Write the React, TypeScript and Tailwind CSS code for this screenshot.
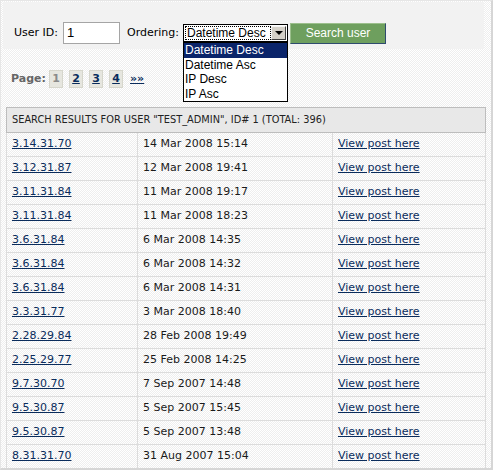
const rows: [string, string][] = [
  ["3.14.31.70", "14 Mar 2008 15:14"],
  ["3.12.31.87", "12 Mar 2008 19:41"],
  ["3.11.31.84", "11 Mar 2008 19:17"],
  ["3.11.31.84", "11 Mar 2008 18:23"],
  ["3.6.31.84", "6 Mar 2008 14:35"],
  ["3.6.31.84", "6 Mar 2008 14:32"],
  ["3.6.31.84", "6 Mar 2008 14:31"],
  ["3.3.31.77", "3 Mar 2008 18:40"],
  ["2.28.29.84", "28 Feb 2008 19:49"],
  ["2.25.29.77", "25 Feb 2008 14:25"],
  ["9.7.30.70", "7 Sep 2007 14:48"],
  ["9.5.30.87", "5 Sep 2007 15:45"],
  ["9.5.30.87", "5 Sep 2007 13:48"],
  ["8.31.31.70", "31 Aug 2007 15:04"],
]

const ORDERINGS = ["Datetime Desc", "Datetime Asc", "IP Desc", "IP Asc"]

const dither =
  "bg-[repeating-conic-gradient(#eeeeee_0%_25%,#ffffff_0%_50%)] bg-size-[2px_2px]"

function SearchForm() {
  return (
    <div className="relative ml-[2px] mt-[1px] h-[47px] w-[481px] bg-[#f2f2f2] pl-[11px] pt-[20px]">
      <div className="flex items-center text-[11px] text-black">
        <span className="w-[49px]">User ID:</span>
        <div className="flex h-[22px] w-[57px] items-center border border-[#a5a5a5] bg-white pl-[3px] font-['Liberation_Sans',sans-serif] text-[13px]">
          1
        </div>
        <span className="ml-[7px] w-[56px]">Ordering:</span>

        {/* select, shown open */}
        <div className="relative">
          <div className="flex h-[18px] w-[105px] items-center border border-black bg-white font-['Liberation_Sans',sans-serif] text-[12px]">
            <div className="ml-px h-[14px] flex-1 overflow-hidden whitespace-nowrap border border-dotted border-black pl-px leading-[12px]">
              Datetime Desc
            </div>
            <div className="mr-px flex h-[14px] w-[15px] shrink-0 items-center justify-center border border-b-[#404040] border-l-[#f4f4f4] border-r-[#404040] border-t-[#f4f4f4] bg-[#d4d0c8]">
              <div className="h-0 w-0 border-x-[4px] border-t-[4px] border-x-transparent border-t-black" />
            </div>
          </div>
          <ul className="absolute left-0 top-[18px] z-10 w-[105px] border border-black bg-white font-['Liberation_Sans',sans-serif] text-[12px] leading-[14.5px]">
            {ORDERINGS.map((o, i) => (
              <li
                key={o}
                className={i === 0 ? "bg-[#0a246a] pl-px text-white" : "pl-px text-black"}
              >
                {o}
              </li>
            ))}
          </ul>
        </div>

        <button
          type="button"
          className="ml-[2px] h-[21px] w-[96px] border border-b-[#2e4a6e] border-l-[#9bbf8c] border-r-[#2e4a6e] border-t-[#9bbf8c] bg-[#6e9f5e] font-['Liberation_Sans',sans-serif] text-[12px] text-white"
        >
          Search user
        </button>
      </div>
    </div>
  )
}

function Pager() {
  return (
    <div className="ml-[10px] mt-[21px] flex h-[18px] items-center text-[11px] font-bold">
      <span className="w-[38px] text-[#666666]">Page:</span>
      <div className="flex items-center gap-[6px]">
        <span className="flex h-[18px] w-[14px] items-center justify-center border border-[#d6d6cc] bg-[#e6e6df] text-[#8a8a8a]">
          1
        </span>
        {["2", "3", "4"].map((p) => (
          <a
            key={p}
            className="flex h-[18px] w-[14px] items-center justify-center border border-[#d6d6cc] bg-[#e6e6df] text-[#0a2c5c] underline"
          >
            {p}
          </a>
        ))}
        <a className="ml-px text-[#0a2c5c] underline">»»</a>
      </div>
    </div>
  )
}

function Results() {
  return (
    <div className="ml-[5px] mt-[19px] w-[480px]">
      <div className="flex h-[26px] items-center border border-[#bdbdbd] bg-[#e8e8e8] pl-[5px] text-[9.8px] text-[#222222]">
        SEARCH RESULTS FOR USER "TEST_ADMIN", ID# 1 (TOTAL: 396)
      </div>
      {rows.map(([ip, date], i) => (
        <div
          key={i}
          className="grid h-[24px] grid-cols-[131px_195px_152px] border-x border-b border-[#dcdcdc] text-[11px]"
        >
          <div className="flex items-center border-r border-[#dcdcdc] pl-[5px]">
            <a className="text-[#0a2c5c] underline">{ip}</a>
          </div>
          <div className="flex items-center border-r border-[#dcdcdc] pl-[5px] text-[#1a1a1a]">
            {date}
          </div>
          <div className="flex items-center pl-[5px]">
            <a className="text-[#0a2c5c] underline">View post here</a>
          </div>
        </div>
      ))}
    </div>
  )
}

export default function App() {
  return (
    <div
      className={`h-[470px] w-[493px] overflow-hidden border-b-2 border-l border-r-2 border-t border-b-[#d6d6d6] border-l-[#e6e6e6] border-r-[#d6d6d6] border-t-[#e6e6e6] font-['DejaVu_Sans',sans-serif] ${dither}`}
    >
      <SearchForm />
      <Pager />
      <Results />
    </div>
  )
}
